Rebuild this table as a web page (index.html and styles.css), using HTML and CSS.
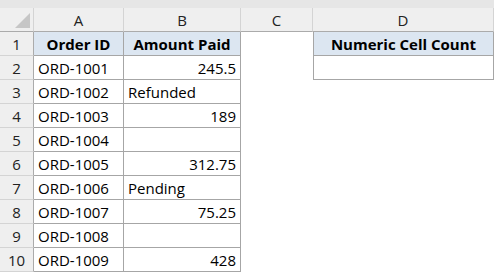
FILE: index.html
```html
<!DOCTYPE html>
<html>
<head>
<meta charset="utf-8">
<link rel="stylesheet" href="styles.css">
</head>
<body>
<div class="topstrip"></div>
<div class="sheet">
  <div class="corner"><div class="tri"></div></div>
  <div class="colhead">A</div>
  <div class="colhead">B</div>
  <div class="colhead">C</div>
  <div class="colhead">D</div>
  <div class="colhead end"></div>

  <div class="rowhead">1</div>
  <div class="cell hdr">Order ID</div>
  <div class="cell hdr">Amount Paid</div>
  <div class="blank"></div>
  <div class="cell hdr dcell">Numeric Cell Count</div>
  <div class="blank"></div>

  <div class="rowhead">2</div>
  <div class="cell">ORD-1001</div>
  <div class="cell num">245.5</div>
  <div class="blank"></div>
  <div class="cell dcell"></div>
  <div class="blank"></div>

  <div class="rowhead">3</div>
  <div class="cell">ORD-1002</div>
  <div class="cell">Refunded</div>
  <div class="blank"></div>
  <div class="blank"></div>
  <div class="blank"></div>

  <div class="rowhead">4</div>
  <div class="cell">ORD-1003</div>
  <div class="cell num">189</div>
  <div class="blank"></div>
  <div class="blank"></div>
  <div class="blank"></div>

  <div class="rowhead">5</div>
  <div class="cell">ORD-1004</div>
  <div class="cell num"></div>
  <div class="blank"></div>
  <div class="blank"></div>
  <div class="blank"></div>

  <div class="rowhead">6</div>
  <div class="cell">ORD-1005</div>
  <div class="cell num">312.75</div>
  <div class="blank"></div>
  <div class="blank"></div>
  <div class="blank"></div>

  <div class="rowhead">7</div>
  <div class="cell">ORD-1006</div>
  <div class="cell">Pending</div>
  <div class="blank"></div>
  <div class="blank"></div>
  <div class="blank"></div>

  <div class="rowhead">8</div>
  <div class="cell">ORD-1007</div>
  <div class="cell num">75.25</div>
  <div class="blank"></div>
  <div class="blank"></div>
  <div class="blank"></div>

  <div class="rowhead">9</div>
  <div class="cell">ORD-1008</div>
  <div class="cell num"></div>
  <div class="blank"></div>
  <div class="blank"></div>
  <div class="blank"></div>

  <div class="rowhead">10</div>
  <div class="cell">ORD-1009</div>
  <div class="cell num">428</div>
  <div class="blank"></div>
  <div class="blank"></div>
  <div class="blank"></div>
</div>
</body>
</html>
```
FILE: styles.css
```css
* { box-sizing: border-box; }
html, body { margin: 0; padding: 0; background: #ffffff; }
body {
  font-family: "Open Sans", "Liberation Sans", sans-serif;
  font-size: 15px;
  color: #000;
  width: 494px;
  height: 273px;
  overflow: hidden;
}
.topstrip {
  height: 8px;
  background: #e6e6e6;
}
.sheet {
  display: grid;
  grid-template-columns: 34px 90px 117px 72px 181px 1fr;
  grid-template-rows: repeat(11, 24px);
}
.corner {
  background: #efefef;
  border-right: 1px solid #d4d4d4;
  border-bottom: 1px solid #ababab;
  position: relative;
}
.tri {
  position: absolute;
  right: 3px;
  bottom: 3px;
  width: 0;
  height: 0;
  border-left: 15px solid transparent;
  border-bottom: 15px solid #c6c6c6;
}
.colhead {
  background: #efefef;
  border-right: 1px solid #d4d4d4;
  border-bottom: 1px solid #ababab;
  display: flex;
  align-items: center;
  justify-content: center;
  color: #222;
  line-height: 1;
  padding-top: 1px;
}
.colhead.end { border-right: none; }
.rowhead {
  background: #efefef;
  border-right: 1px solid #ababab;
  border-bottom: 1px solid #d4d4d4;
  display: flex;
  align-items: center;
  justify-content: center;
  color: #222;
  padding-top: 1px;
}
.cell {
  border-right: 1px solid #a6a6a6;
  border-bottom: 1px solid #a6a6a6;
  display: flex;
  align-items: center;
  padding: 1px 4px 0 4px;
  white-space: nowrap;
}
.cell.num { justify-content: flex-end; }
.cell.hdr {
  background: #dce6f1;
  font-weight: 700;
  justify-content: center;
}
.cell.dcell { border-left: 1px solid #a6a6a6; }
.blank { background: #fff; }
```
